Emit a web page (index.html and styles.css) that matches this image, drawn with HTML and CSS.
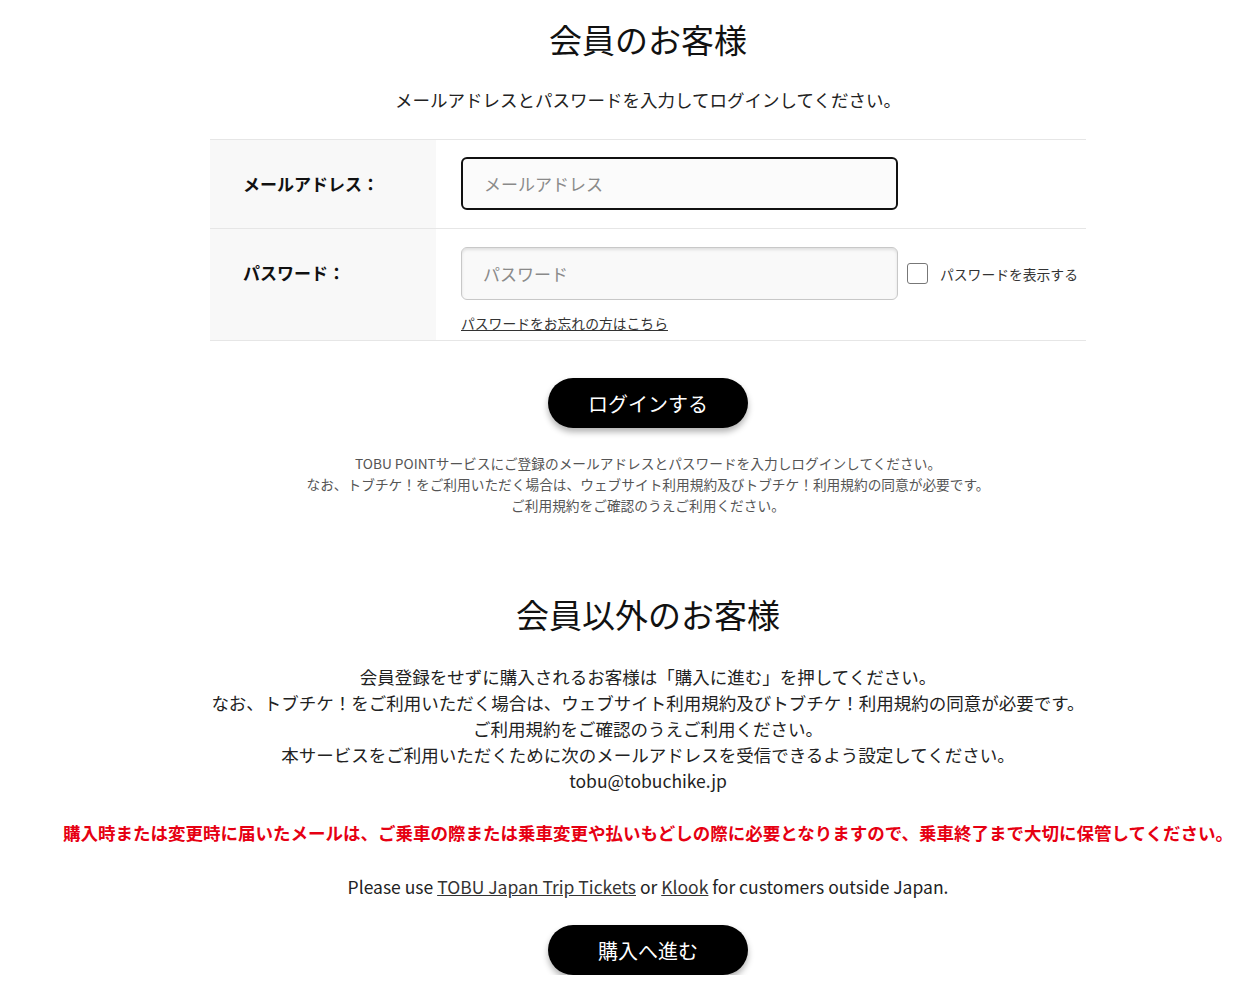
FILE: index.html
```html
<!DOCTYPE html>
<html lang="ja">
<head>
  <meta charset="UTF-8" />
  <meta name="viewport" content="width=device-width, initial-scale=1.0"/>
  <title>ログイン</title>
  <link rel="stylesheet" href="styles.css">
</head>
<body>
  <main class="page">
    <section class="member">
      <h1 class="heading">会員のお客様</h1>
      <p class="lead">メールアドレスとパスワードを入力してログインしてください。</p>

      <div class="login-table">
        <div class="row">
          <div class="label">メールアドレス：</div>
          <div class="field">
            <input type="text" class="input input-focus" placeholder="メールアドレス" />
          </div>
        </div>
        <div class="row row-pass">
          <div class="label">パスワード：</div>
          <div class="field">
            <div class="pass-line">
              <input type="password" class="input" placeholder="パスワード" />
              <label class="show-pass"><span class="check"></span>パスワードを表示する</label>
            </div>
            <a href="#" class="forgot">パスワードをお忘れの方はこちら</a>
          </div>
        </div>
      </div>

      <div class="btn-wrap"><button class="btn">ログインする</button></div>

      <p class="note">
        TOBU POINTサービスにご登録のメールアドレスとパスワードを入力しログインしてください。<br>
        なお、トブチケ！をご利用いただく場合は、ウェブサイト利用規約及びトブチケ！利用規約の同意が必要です。<br>
        ご利用規約をご確認のうえご利用ください。
      </p>
    </section>

    <section class="guest">
      <h2 class="heading heading-2">会員以外のお客様</h2>
      <p class="guest-text">
        会員登録をせずに購入されるお客様は「購入に進む」を押してください。<br>
        なお、トブチケ！をご利用いただく場合は、ウェブサイト利用規約及びトブチケ！利用規約の同意が必要です。<br>
        ご利用規約をご確認のうえご利用ください。<br>
        本サービスをご利用いただくために次のメールアドレスを受信できるよう設定してください。<br>
        tobu@tobuchike.jp
      </p>
      <p class="warning">購入時または変更時に届いたメールは、ご乗車の際または乗車変更や払いもどしの際に必要となりますので、乗車終了まで大切に保管してください。</p>
      <p class="overseas">Please use <a href="#">TOBU Japan Trip Tickets</a> or <a href="#">Klook</a> for customers outside Japan.</p>
      <div class="btn-wrap btn-wrap-2"><button class="btn">購入へ進む</button></div>
    </section>
  </main>
</body>
</html>
```

FILE: styles.css
```css
body {
  margin: 0;
  background: #ffffff;
  color: #222;
  font-family: "Noto Sans CJK JP", "Noto Sans", sans-serif;
}

.page {
  padding-left: 43px;
  text-align: center;
}

p {
  margin: 0;
}

.heading {
  margin: 16px 0 0;
  font-size: 33px;
  font-weight: 400;
  line-height: 46px;
  color: #111;
}

.heading-2 {
  margin-top: 75px;
}

.lead {
  margin-top: 25px;
  font-size: 17.5px;
  line-height: 26px;
}

/* login table */
.login-table {
  width: 876px;
  margin: 26px auto 0;
  border-top: 1px solid #e6e6e6;
  text-align: left;
}

.row {
  display: flex;
  border-bottom: 1px solid #e6e6e6;
}

.label {
  width: 193px;
  flex-shrink: 0;
  padding: 31px 0 0 33px;
  background: #f8f8f8;
  font-size: 17px;
  font-weight: 700;
  line-height: 26px;
  color: #111;
}

.field {
  flex: 1;
  padding: 17px 0 18px 25px;
}

.row-pass .field {
  padding: 18px 0 6px 25px;
}

.input {
  box-sizing: border-box;
  width: 437px;
  height: 53px;
  padding: 0 21px;
  border: 1px solid #c8c8c8;
  border-radius: 6px;
  background: #f9f9f9;
  box-shadow: inset 0 2px 3px rgba(0, 0, 0, 0.1);
  font-family: inherit;
  font-size: 17px;
  color: #222;
  outline: none;
}

.input::placeholder {
  color: #8a8a8a;
}

.input-focus {
  border: 2px solid #111;
  padding-left: 21px;
  background: #fbfbfb;
  box-shadow: none;
}

.pass-line {
  display: flex;
  align-items: center;
}

.show-pass {
  display: flex;
  align-items: center;
  margin-left: 9px;
  font-size: 13.8px;
  color: #333;
}

.check {
  box-sizing: border-box;
  width: 21px;
  height: 21px;
  margin-right: 12px;
  border: 1px solid #777;
  border-radius: 3px;
  background: #fff;
}

.forgot {
  display: inline-block;
  margin-top: 13px;
  font-size: 13.8px;
  line-height: 20px;
  color: #333;
}

/* buttons */
.btn-wrap {
  margin-top: 37px;
}

.btn-wrap-2 {
  margin-top: 25px;
}

.btn {
  width: 200px;
  height: 50px;
  border: none;
  border-radius: 25px;
  background: #000;
  color: #fff;
  font-family: inherit;
  font-size: 20px;
  font-weight: 400;
  box-shadow: 0 4px 6px rgba(0, 0, 0, 0.3);
  cursor: pointer;
}

.note {
  margin-top: 25px;
  font-size: 13.7px;
  line-height: 21px;
  color: #555;
}

.guest-text {
  margin-top: 27px;
  font-size: 17.5px;
  line-height: 26px;
}

.warning {
  margin-top: 26px;
  font-size: 17.5px;
  font-weight: 700;
  line-height: 26px;
  color: #e60012;
  white-space: nowrap;
}

.overseas {
  margin-top: 28px;
  font-size: 17.5px;
  line-height: 26px;
}

.overseas a {
  color: #333;
}
```
